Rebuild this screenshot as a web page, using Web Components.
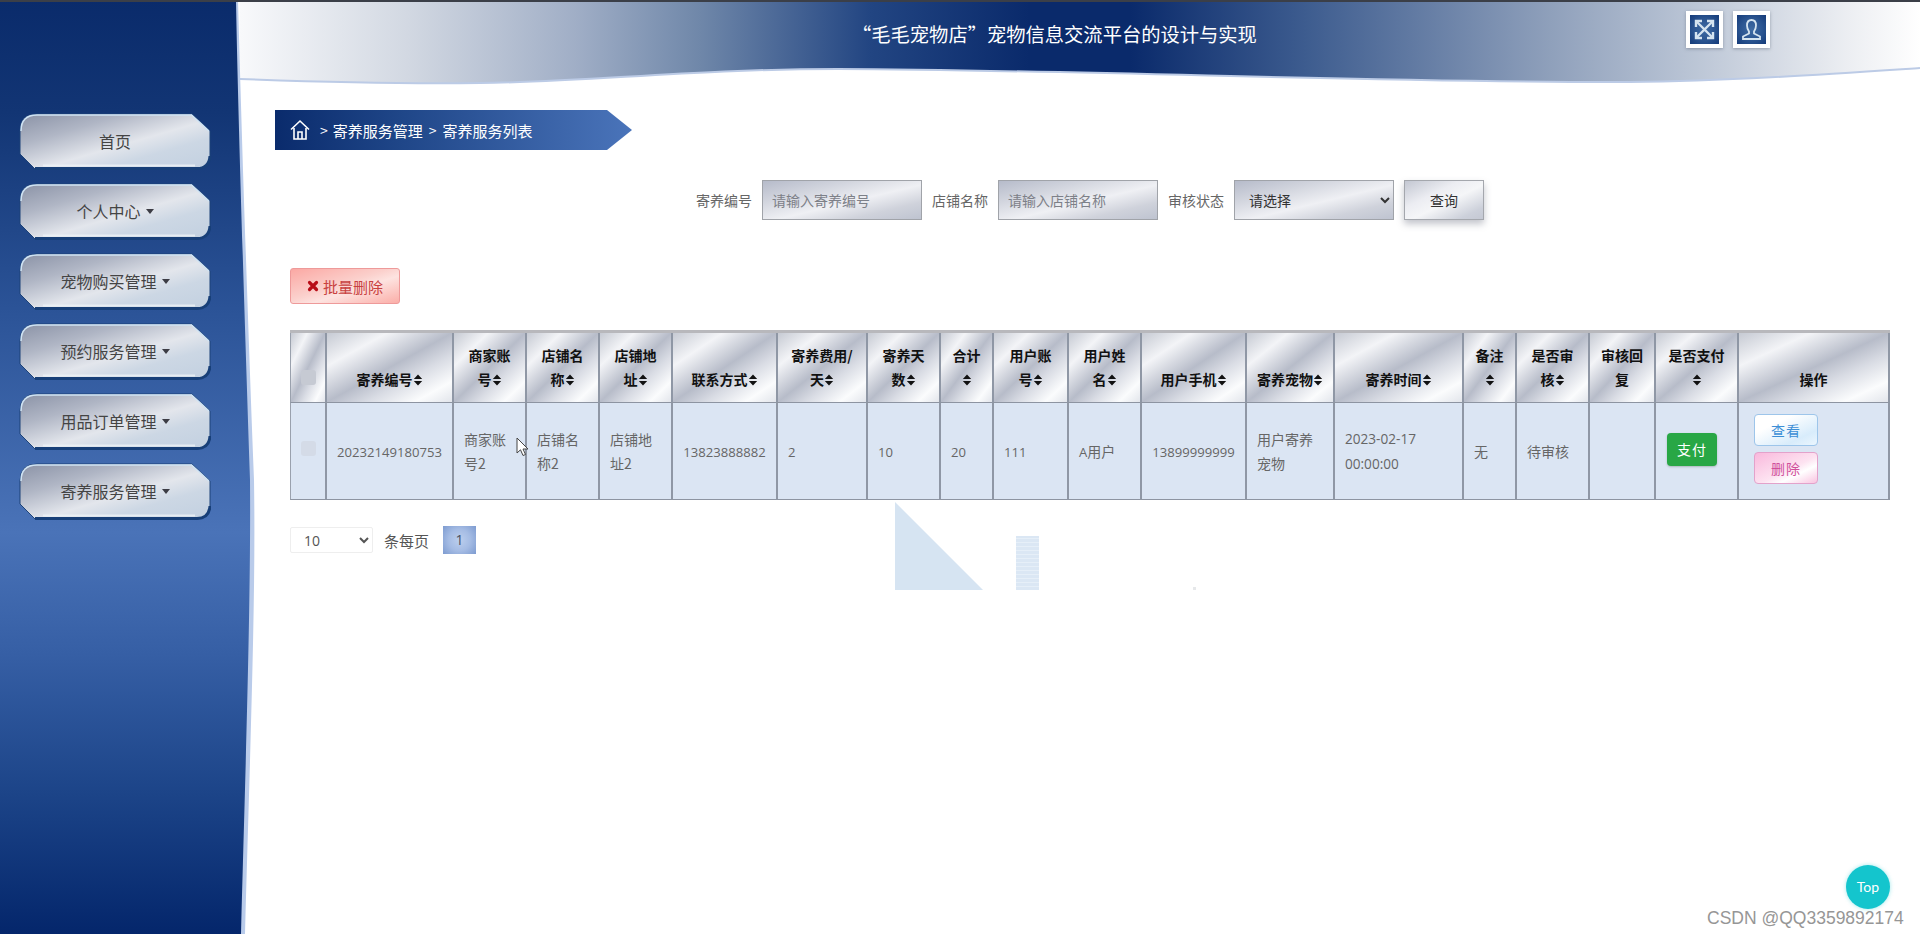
<!DOCTYPE html>
<html lang="zh-CN">
<head>
<meta charset="utf-8">
<title>寄养服务列表</title>
<style>
html,body{margin:0;padding:0;background:#fff;}
body{font-family:"Open Sans","Noto Sans CJK SC",sans-serif;font-size:14px;color:#666;overflow:hidden;}
</style>
</head>
<body>
<app-shell>
  <side-bar slot="side">
    <nav-btn>首页</nav-btn>
    <nav-btn caret>个人中心</nav-btn>
    <nav-btn caret>宠物购买管理</nav-btn>
    <nav-btn caret>预约服务管理</nav-btn>
    <nav-btn caret>用品订单管理</nav-btn>
    <nav-btn caret>寄养服务管理</nav-btn>
  </side-bar>
  <top-header slot="main">“毛毛宠物店”宠物信息交流平台的设计与实现</top-header>
  <page-content slot="main">
    <bread-crumb></bread-crumb>
    <search-bar></search-bar>
    <batch-btn>批量删除</batch-btn>
    <data-table></data-table>
    <page-bar></page-bar>
  </page-content>
  <float-layer slot="main"></float-layer>
</app-shell>
<script>
const CJK = '"Noto Sans CJK SC","Open Sans",sans-serif';
function def(name, html, setup){
  customElements.define(name, class extends HTMLElement{
    constructor(){
      super();
      const root = this.attachShadow({mode:'open'});
      root.innerHTML = typeof html === 'function' ? html(this) : html;
      if(setup) setup(root,this);
    }
  });
}
const METAL = 'linear-gradient(to bottom right,#b6bbca 0%,#d2d5de 28%,#eff0f4 55%,#cfd2db 78%,#bec3d0 100%)';

def('app-shell', `<style>
:host{display:flex;position:relative;width:1920px;height:934px;overflow:hidden;background:#fff;}
.bar{position:absolute;left:0;top:0;right:0;height:2px;background:#3b3f48;z-index:5;}
.side{display:block;flex:0 0 240px;position:relative;z-index:2;}
.main{display:block;flex:1 1 auto;min-width:0;}
</style><div class="bar"></div><div class="side"><slot name="side"></slot></div><div class="main"><slot name="main"></slot></div>`);

def('side-bar', `<style>
:host{display:flex;flex-direction:column;gap:14px;position:relative;height:934px;box-sizing:border-box;padding:113px 0 0 19px;}
svg{position:absolute;left:0;top:0;z-index:0;}
::slotted(*){position:relative;z-index:1;}
</style>
<svg width="260" height="934" viewBox="0 0 260 934">
<defs>
<linearGradient id="g" x1="0" y1="0" x2="0" y2="1">
<stop offset="0" stop-color="#0a2b6b"/><stop offset=".12" stop-color="#123574"/><stop offset=".33" stop-color="#2b5397"/><stop offset=".57" stop-color="#4a73b8"/><stop offset=".7" stop-color="#365fa5"/><stop offset=".85" stop-color="#1c4488"/><stop offset="1" stop-color="#04266b"/>
</linearGradient>
</defs>
<path d="M0 0H238C241 110 247 300 254 480C256 600 250 750 245 934H0Z" fill="#b9cbea"/>
<path d="M0 0H236C238 110 244 300 250 480C251 600 246 750 241 934H0Z" fill="url(#g)"/>
</svg><slot></slot>`);

def('nav-btn', h => `<style>
:host{display:block;position:relative;width:192px;height:56px;font:16px ${CJK};color:#444;}
svg{position:absolute;left:0;top:0;}
.t{position:relative;display:flex;height:56px;align-items:center;justify-content:center;gap:5px;}
.c{display:${h.hasAttribute('caret')?'inline-block':'none'};width:0;height:0;border-left:4.5px solid transparent;border-right:4.5px solid transparent;border-top:5px solid #3c3c44;}
</style>
<svg width="192" height="58" viewBox="0 0 192 58">
<defs>
<linearGradient id="m" x1="0" y1="0" x2="1" y2="1">
<stop offset="0" stop-color="#8a92a6"/><stop offset=".28" stop-color="#b0b6c5"/><stop offset=".55" stop-color="#e3e6ec"/><stop offset=".72" stop-color="#ccd7e4"/><stop offset="1" stop-color="#c2d0e0"/>
</linearGradient>
</defs>
<path d="M18 1H173L191 18V43Q191 56 178 56H16L1 41V18Q1 1 18 1Z" fill="url(#m)" stroke="#1c4378" stroke-width="1"/>
<path d="M2 18Q2 2 18 2H172.500L190 18" fill="none" stroke="#cfe3f4" stroke-width="1.500"/>
<path d="M16 55.500H178Q190 55.500 191 43" fill="none" stroke="#173f78" stroke-width="3"/>
<path d="M24 52.500H176" stroke="#eef3f7" stroke-width="2" opacity=".8"/>
</svg>
<div class="t"><span><slot></slot></span><i class="c"></i></div>`);

def('top-header', `<style>
:host{display:flex;position:relative;height:82px;box-sizing:border-box;padding:11px 0 0 612px;align-items:flex-start;}
svg.bg{position:absolute;left:0;top:0;}
.title{position:relative;width:404px;font:19.300px/46px ${CJK};color:#fff;white-space:nowrap;}
.icons{position:relative;display:flex;gap:10px;margin-left:430px;}
.ic{display:block;width:29px;height:29px;border:4px solid #fff;box-shadow:0 1px 3px rgba(90,100,120,.5);background:radial-gradient(circle,#3f6ba3 0,#2a5490 55%,#143a78 100%);}
</style>
<svg class="bg" width="1680" height="90" viewBox="0 0 1680 90">
<defs>
<linearGradient id="h" x1="0" y1="0" x2="1" y2="0">
<stop offset="0" stop-color="#f8f9fb"/><stop offset=".1" stop-color="#d2d8e2"/><stop offset=".2" stop-color="#a0aec6"/><stop offset=".274" stop-color="#6f87a9"/><stop offset=".375" stop-color="#224582"/><stop offset=".47" stop-color="#0a2a6b"/><stop offset=".53" stop-color="#0a2a6b"/><stop offset=".634" stop-color="#3d5c8f"/><stop offset=".78" stop-color="#8fa0bb"/><stop offset=".86" stop-color="#b8c3d4"/><stop offset=".957" stop-color="#eceef2"/><stop offset="1" stop-color="#fff"/>
</linearGradient>
</defs>
<path d="M0 79C80 82 170 84 240 83C350 82 450 69 598 69C850 70 1150 83 1390 82C1490 81 1590 74 1680 68V0H0Z" fill="url(#h)"/>
<path d="M0 79C80 82 170 84 240 83C350 82 450 69 598 69C850 70 1150 83 1390 82C1490 81 1590 74 1680 68" fill="none" stroke="#bccbe6" stroke-width="2"/>
</svg>
<div class="title"><slot></slot></div>
<div class="icons">
<svg class="ic" viewBox="0 0 29 29" fill="none" stroke="#d5e4f0" stroke-width="2.400"><path d="M7 7L22 22M22 7L7 22"/><path d="M6 12V6H12M17 6H23V12M23 17V23H17M12 23H6V17" stroke-width="2.400"/></svg>
<svg class="ic" viewBox="0 0 29 29" fill="none" stroke="#d5e4f0" stroke-width="1.800"><path d="M14.500 5C11.500 5 10 7.500 10 10.500C10 13 11 15 12 16.500V18.500L6 21.500V24H23V21.500L17 18.500V16.500C18 15 19 13 19 10.500C19 7.500 17.500 5 14.500 5Z"/></svg>
</div>`);

def('page-content', `<style>
:host{display:block;position:relative;padding:28px 30px 0 50px;}
</style><slot></slot>`);

def('bread-crumb', `<style>
:host{display:flex;align-items:center;width:357px;height:40px;margin-left:-15px;box-sizing:border-box;padding-left:15px;color:#fff;font:15px ${CJK};
background:linear-gradient(90deg,#0a2b6c 0%,#1f4688 35%,#4a74ba 100%);clip-path:polygon(0 0,332px 0,357px 20px,332px 40px,0 40px);}
svg{flex:none;margin-right:10px;}
.s{margin:0 6px;font-size:14px;}
.s:first-of-type{margin-left:0;margin-right:5px;}
</style>
<svg width="20" height="22" viewBox="0 0 20 22" fill="none" stroke="#fff" stroke-width="1.600"><path d="M1 10.500L10 2L19 10.500"/><path d="M4 9V20H16V9"/><path d="M8 20V13H12V20"/></svg>
<span class="s">&gt;</span><span>寄养服务管理</span><span class="s">&gt;</span><span>寄养服务列表</span>`);

def('search-bar', `<style>
:host{display:flex;justify-content:center;align-items:center;height:40px;margin-top:30px;font:14px ${CJK};color:#666;}
label{margin-right:10px;white-space:nowrap;}
input,select{box-sizing:border-box;width:160px;height:40px;border:1px solid #a0a3a9;background:${METAL};font:14px ${CJK};margin-right:10px;padding:0 9px;outline:none;border-radius:0;}
input::placeholder{color:#7d8088;opacity:1;}
select{color:#333;padding-left:10px;}
button{box-sizing:border-box;width:80px;height:40px;border:1px solid #a4a7ad;background:linear-gradient(to bottom right,#c3c7d2 0%,#ecedf2 35%,#f5f6f8 55%,#ccd0da 85%,#c4c8d3 100%);font:14px ${CJK};color:#333;box-shadow:0 4px 7px rgba(120,125,140,.45);padding:0;}
</style>
<label>寄养编号</label><input placeholder="请输入寄养编号">
<label>店铺名称</label><input placeholder="请输入店铺名称">
<label>审核状态</label><select><option>请选择</option></select>
<button>查询</button>`);

def('batch-btn', `<style>
:host{display:flex;align-items:center;justify-content:center;gap:4px;box-sizing:border-box;width:110px;height:36px;margin-top:48px;border:1px solid #ee9a9a;border-radius:3px;
background:linear-gradient(to bottom right,#fba8a3 0%,#fbd0cc 45%,#fde3e0 60%,#fbaea8 100%);color:#c8413f;font:15px ${CJK};}
svg{flex:none;}
</style><svg width="12" height="12" viewBox="0 0 12 12"><path d="M2.500 2.500L9.500 9.500M9.500 2.500L2.500 9.500" stroke="#b80c16" stroke-width="3.200" stroke-linecap="round"/></svg><slot></slot>`);

const sortIcon = '<svg class="so" width="10" height="12" viewBox="0 0 10 13"><path d="M5 .5L9.500 5.500H.5ZM5 12.500L.5 7.500H9.500Z" fill="#111"/></svg>';
const cols = [
 [35,'',0],[127,'寄养编号',1],[73,'商家账号',1],[73,'店铺名称',1],[73,'店铺地址',1],[105,'联系方式',1],[90,'寄养费用/天',1],[73,'寄养天数',1],[53,'合计',1],[75,'用户账号',1],[73,'用户姓名',1],[105,'用户手机',1],[88,'寄养宠物',1],[129,'寄养时间',1],[53,'备注',1],[73,'是否审核',1],[66,'审核回复',0],[83,'是否支付',1],[153,'操作',0]
];
const row = ['<span class="num">20232149180753</span>','商家账号2','店铺名称2','店铺地址2','<span class="num">13823888882</span>','<span class="num">2</span>','<span class="num">10</span>','<span class="num">20</span>','<span class="num">111</span>','<span class="num">A</span>用户','<span class="num">13899999999</span>','用户寄养宠物','<span class="num dt">2023-02-17 00:00:00</span>','无','待审核',''];
def('data-table', `<style>
:host{display:block;width:1600px;margin-top:26px;font:14px/24px ${CJK};color:#666;}
table{border-collapse:separate;border-spacing:0;table-layout:fixed;width:1600px;border-top:3px solid #b8b8bc;}
th,td{box-sizing:border-box;border-left:2px solid #8f97a5;padding:0 10px;}
th:first-child,td:first-child{border-left:1px solid #9aa1ad;}
th:last-child,td:last-child{border-right:2px solid #8f97a5;}
th{height:70px;vertical-align:bottom;padding-bottom:11px;font-weight:700;color:#111;text-align:center;border-bottom:1px solid #8d94a1;
background:linear-gradient(to bottom right,#c6cad3 0%,#f3f4f7 24%,#b7bcc9 50%,#d9dce4 66%,#fbfcfd 85%,#e2e5eb 100%);}
td{height:97px;background:#dbe5f3;vertical-align:middle;border-bottom:1px solid #8d94a1;padding-left:10px;}
.num{font:13.100px/24px "Open Sans",sans-serif;}
.dt{font-size:13.600px;}
.so{vertical-align:-1px;}
.ck{display:block;width:15px;height:15px;margin:0 auto;border-radius:3px;}
th .ck{background:#c6cad3;margin-bottom:6px;}
td .ck{background:#d4dbe7;margin-top:-6px;}
td.c0{padding:0;}th.c0{padding:0 0 11px;}
.c{text-align:center;}
.pay{display:block;width:50px;height:33px;border-radius:4px;background:#28a745;color:#fff;font:14px/32px ${CJK};letter-spacing:1px;text-align:center;border:0;padding:0;margin:-4px 0 0 1px;box-shadow:0 1px 2px rgba(60,80,60,.3);}
td.pc{padding-left:10px;}
td.act{vertical-align:top;padding:11px 0 0 15px;}
.b{display:block;box-sizing:border-box;width:64px;height:32px;border-radius:4px;font:14px/30px ${CJK};letter-spacing:1px;text-align:center;padding:0;}
.v{border:1px solid #9dc5ea;background:linear-gradient(to bottom right,#fff 0%,#fff 30%,#d8ecfb 75%,#ebf6fe 100%);color:#3d8fd6;}
.d{border:1px solid #e3a2cb;background:linear-gradient(to bottom right,#f9b8dc 0%,#fde3f1 55%,#fff 70%,#f9c3e0 100%);color:#d0509c;margin-top:6px;}
</style><table><colgroup></colgroup><thead><tr></tr></thead><tbody><tr></tr></tbody></table>`, root => {
  root.querySelector('colgroup').innerHTML = cols.map(c=>`<col style="width:${c[0]}px">`).join('');
  root.querySelector('thead tr').innerHTML = cols.map((c,i)=>i===0?'<th class="c0"><span class="ck"></span></th>':`<th>${c[1]}${c[2]?sortIcon:''}</th>`).join('');
  const tds = ['<td class="c0"><span class="ck"></span></td>'].concat(row.map((t,i)=>{
    const cls = i===0||i===4||i===10 ? ' class="c"' : '';
    return `<td${cls}>${t}</td>`;
  }));
  tds.push('<td class="pc"><button class="pay">支付</button></td>');
  tds.push('<td class="act"><button class="b v">查看</button><button class="b d">删除</button></td>');
  root.querySelector('tbody tr').innerHTML = tds.join('');
});

def('page-bar', `<style>
:host{display:flex;align-items:center;height:28px;margin-top:26px;font:15px ${CJK};color:#555;}
select{box-sizing:border-box;width:83px;height:26px;margin-left:0;border:1px solid #eee;background:#fff;color:#555;font:14px "Open Sans",sans-serif;padding-left:9px;border-radius:2px;}
span{margin-left:11px;}
b{display:block;width:33px;height:28px;margin-left:14px;font:400 14px/28px "Open Sans",sans-serif;color:#4a5060;text-align:center;background:radial-gradient(circle,#bccfee 0,#a5bce4 50%,#7d9bd0 100%);}
</style><select><option>10</option></select><span>条每页</span><b>1</b>`);

def('float-layer', `<style>
:host{display:block;}
.tri{position:absolute;left:895px;top:502px;width:88px;height:88px;background:#d6e4f2;clip-path:polygon(0 0,100% 100%,0 100%);}
.bar{position:absolute;left:1016px;top:536px;width:23px;height:54px;background:repeating-linear-gradient(0deg,#dbe7f4 0 3px,#e6eff8 3px 4px);}
.dot{position:absolute;left:1193px;top:587px;width:3px;height:3px;background:#e6e8ea;}
.cur{position:absolute;left:516px;top:437px;}
.top{position:absolute;left:1846px;top:865px;width:44px;height:44px;border-radius:50%;background:#14c5cd;color:#fff;font:14px/44px "Lato","Open Sans",sans-serif;text-align:center;box-shadow:0 0 4px rgba(20,197,205,.4);}
.wm{position:absolute;left:1707px;top:907px;font:17.500px/22px "Liberation Sans",sans-serif;color:#969696;white-space:nowrap;}
</style>
<div class="tri"></div><div class="bar"></div><div class="dot"></div>
<svg class="cur" width="13" height="20" viewBox="0 0 13 20"><path d="M1 1V16L4.500 12.800L7 18.500L9.500 17.500L7 12H12Z" fill="#fff" stroke="#444" stroke-width="1"/></svg>
<div class="top">Top</div><div class="wm">CSDN @QQ3359892174</div>`);
</script>
</body>
</html>
